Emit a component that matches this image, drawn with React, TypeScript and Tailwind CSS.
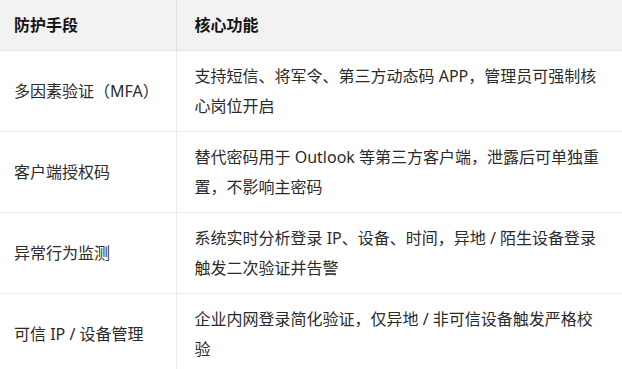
import React from 'react';

type Row = { name: string; desc: string };

const rows: Row[] = [
	{
		name: '多因素验证（MFA）',
		desc: '支持短信、将军令、第三方动态码 APP，管理员可强制核心岗位开启',
	},
	{
		name: '客户端授权码',
		desc: '替代密码用于 Outlook 等第三方客户端，泄露后可单独重置，不影响主密码',
	},
	{
		name: '异常行为监测',
		desc: '系统实时分析登录 IP、设备、时间，异地 / 陌生设备登录触发二次验证并告警',
	},
	{
		name: '可信 IP / 设备管理',
		desc: '企业内网登录简化验证，仅异地 / 非可信设备触发严格校验',
	},
];

/**
 * Table of mailbox protection measures.
 */
export default function App() {
	return (
		<div className="w-[622px] h-[369px] overflow-hidden bg-white font-['Segoe_UI','Noto_Sans','Noto_Sans_CJK_SC',sans-serif] text-[16px] text-[#2b2b2b]">
			<table className="w-[622px] border-collapse table-fixed">
				<colgroup>
					<col className="w-[176px]" />
					<col />
				</colgroup>
				<thead>
					<tr className="h-[50px] bg-[#f2f2f2] border-b border-[#e3e3e3]">
						<th className="pl-[14px] text-left align-middle font-bold text-[#141414] border-r border-[#e3e3e3]">
							防护手段
						</th>
						<th className="pl-[18px] text-left align-middle font-bold text-[#141414]">
							核心功能
						</th>
					</tr>
				</thead>
				<tbody>
					{rows.map((row) => (
						<tr key={row.name} className="h-[81px] border-b border-[#ebebeb]">
							<td className="pl-[14px] align-middle leading-[30px] border-r border-[#ebebeb]">
								{row.name}
							</td>
							<td className="pl-[18px] pr-[17px] py-[10px] align-middle leading-[30px]">
								{row.desc}
							</td>
						</tr>
					))}
				</tbody>
			</table>
		</div>
	);
}
